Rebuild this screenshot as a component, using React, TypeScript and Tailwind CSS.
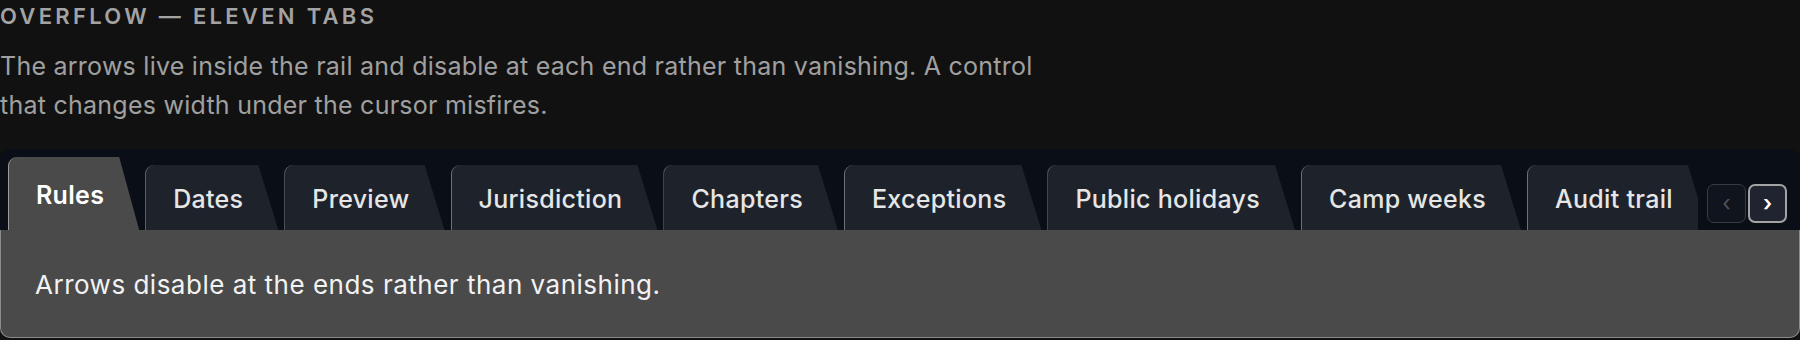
import { FC } from 'react'

const TABS = [
  'Rules',
  'Dates',
  'Preview',
  'Jurisdiction',
  'Chapters',
  'Exceptions',
  'Public holidays',
  'Camp weeks',
  'Audit trail',
  'Notifications',
  'Export',
]

interface TabProps {
  label: string;
  active: boolean;
}

const Tab: FC<TabProps> = ({ label, active }) => {
  const shape =
    'shrink-0 flex items-center pl-[27px] pr-[35px] pt-[3px] rounded-tl-[9px] border-l [clip-path:polygon(0_0,calc(100%_-_20px)_0,100%_100%,0_100%)] whitespace-nowrap text-[25px] tracking-[0.3px] leading-[36px]'
  if (active) {
    return (
      <div className={`${shape} h-[73px] bg-[#4a4a4a] border-[#9a9a9a] font-semibold text-white`}>
        {label}
      </div>
    )
  }
  return (
    <div className={`${shape} h-[65px] bg-[#1e232b] border-[#6b7079] font-medium text-[#e6e6e6]`}>
      {label}
    </div>
  )
}

export default function App() {
  return (
    <div className="w-[1800px] h-[340px] bg-[#111111] overflow-hidden font-['Inter','Noto_Sans',sans-serif]">
      {/* Heading */}
      <h2 className="text-[22px] leading-[33px] font-semibold tracking-[0.15em] text-[#a3a3a3]">
        OVERFLOW — ELEVEN TABS
      </h2>
      <p className="mt-[14px] max-w-[1060px] text-[25px] tracking-[0.25px] leading-[39px] text-[#a0a0a0]">
        The arrows live inside the rail and disable at each end rather than vanishing. A control that changes width under the cursor misfires.
      </p>

      {/* Rail */}
      <div className="mt-[24px] flex items-end pl-[8px] pr-[13px] bg-[#0a0f17] rounded-t-[10px]">
        <div className="flex-1 min-w-0 overflow-hidden flex items-end gap-[6px] pt-[8px]">
          {TABS.map((t, i) => (
            <Tab key={t} label={t} active={i === 0} />
          ))}
        </div>
        <div className="ml-[9px] mb-[7px] flex gap-[2px]">
          <button
            disabled
            className="w-[39px] h-[39px] rounded-[7px] border-[1.5px] border-[#383d45] bg-[#10151d] text-[#4d525a] text-[22px] leading-none flex items-center justify-center pb-[2px]"
          >
            ‹
          </button>
          <button className="w-[39px] h-[39px] rounded-[7px] border-2 border-[#a3a3a3] bg-[#1f2430] text-white text-[22px] font-semibold leading-none flex items-center justify-center pb-[2px]">
            ›
          </button>
        </div>
      </div>

      {/* Panel */}
      <div className="bg-[#4a4a4a] border-x border-b border-[#8c8c8c] rounded-b-[10px] px-[34px] pt-[37px] pb-[34px] text-[26px] tracking-[0.5px] leading-[36px] text-[#f2f2f2]">
        Arrows disable at the ends rather than vanishing.
      </div>
    </div>
  )
}
